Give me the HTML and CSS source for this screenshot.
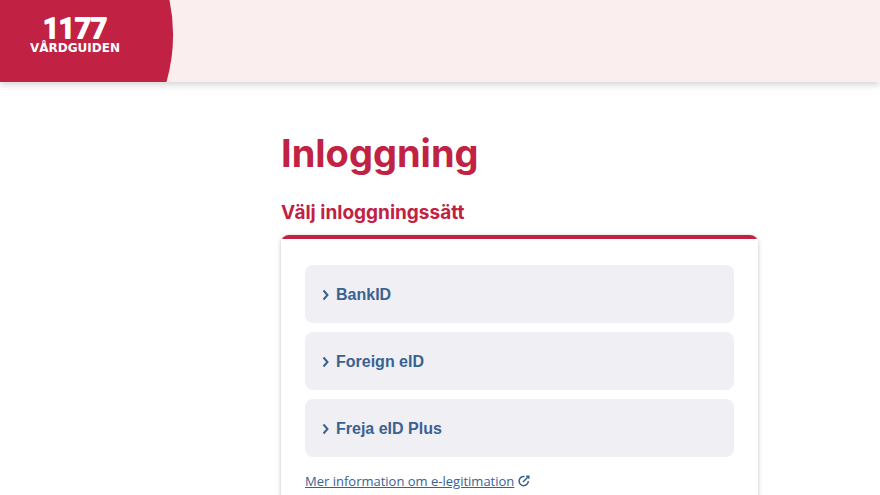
FILE: index.html
```html
<!DOCTYPE html>
<html lang="sv">
<head>
<meta charset="UTF-8">
<meta name="viewport" content="width=device-width, initial-scale=1">
<title>Inloggning</title>
<link rel="stylesheet" href="styles.css">
</head>

<body>

<header class="header">
  <svg class="header-shape" width="174" height="82" viewBox="0 0 174 82" aria-hidden="true">
    <path d="M0 0H169.500Q178 41 166.500 82H0Z" fill="#c12143"/>
  </svg>
  <svg class="logo" width="94" height="40" viewBox="0 0 94 40">
    <text class="logo-number" x="47" y="24">1177</text>
    <text class="logo-name" x="47" y="38">VÅRDGUIDEN</text>
  </svg>
</header>

<main class="container">
  <div class="content">
    <h1>Inloggning</h1>
    <h2>Välj inloggningssätt</h2>

    <div class="card">
      <button type="button" class="option">
        <svg class="chevron" width="8" height="12" viewBox="0 0 8 12" aria-hidden="true"><path d="M1.500 1.500L5.500 6L1.500 10.500"/></svg>
        BankID
      </button>
      <button type="button" class="option">
        <svg class="chevron" width="8" height="12" viewBox="0 0 8 12" aria-hidden="true"><path d="M1.500 1.500L5.500 6L1.500 10.500"/></svg>
        Foreign eID
      </button>
      <button type="button" class="option">
        <svg class="chevron" width="8" height="12" viewBox="0 0 8 12" aria-hidden="true"><path d="M1.500 1.500L5.500 6L1.500 10.500"/></svg>
        Freja eID Plus
      </button>

      <a href="#" class="more">
        <span>Mer information om e-legitimation</span>
        <svg class="external" width="12" height="12" viewBox="0 0 12 12" aria-hidden="true">
          <path d="M6.500 1.500H6A4.600 4.600 0 1 0 10.300 6"/>
          <path d="M5 7L10.300 1.700"/>
          <path d="M8.200 1.200H10.800V3.800"/>
        </svg>
      </a>
    </div>
  </div>
</main>

</body>
</html>
```

FILE: styles.css
```css
* {
  box-sizing: border-box;
}

body {
  margin: 0;
  background: #fff;
  font-family: "Open Sans", "Noto Sans", sans-serif;
}

/* Header */
.header {
  position: relative;
  display: flex;
  padding: 14px 28px 28px;
  background: #faeeef;
  box-shadow: 0 2px 8px rgba(0, 0, 0, 0.2);
}

.header-shape {
  position: absolute;
  top: 0;
  left: 0;
}

.logo {
  position: relative;
  overflow: visible;
  fill: #fff;
  text-anchor: middle;
}

.logo-number {
  font-family: Roboto, sans-serif;
  font-size: 28px;
  font-weight: 500;
  stroke: #fff;
  stroke-width: 2;
  stroke-linejoin: round;
}

.logo-name {
  font-family: "DejaVu Sans", sans-serif;
  font-size: 12px;
  font-weight: 700;
}

/* Content */
.container {
  max-width: 636px;
  margin: 0 auto;
}

.content {
  margin-left: 25%;
  padding: 48px 0;
}

h1, h2 {
  margin: 0;
  color: #c12143;
  font-family: Inter, sans-serif;
  font-weight: 700;
  font-optical-sizing: none;
}

h1 {
  font-size: 38px;
  line-height: 46px;
}

h2 {
  margin: 22px 0 7px;
  font-size: 19px;
  line-height: 30px;
}

.card {
  display: flex;
  flex-direction: column;
  gap: 9px;
  padding: 30px 24px 32px;
  border-radius: 8px;
  background: linear-gradient(#c12143 4px, #fff 4px);
  box-shadow: 0 1px 4px rgba(0, 0, 0, 0.25);
}

.option {
  display: flex;
  align-items: center;
  gap: 6px;
  padding: 19px 17px 17px;
  border: none;
  border-radius: 8px;
  background: #f0eff4;
  color: #396291;
  font-family: "Liberation Sans", Arial, sans-serif;
  font-size: 16px;
  font-weight: 700;
  line-height: 22px;
  text-align: left;
  cursor: pointer;
}

.chevron, .external {
  flex: none;
  fill: none;
  stroke: #396291;
  stroke-width: 2;
}

.more {
  display: flex;
  align-items: center;
  gap: 4px;
  margin-top: 4px;
  color: #396291;
  font-size: 13px;
  line-height: 22px;
  text-decoration: none;
}

.more span {
  text-decoration: underline;
}

.external {
  stroke-width: 1.5;
}
```
